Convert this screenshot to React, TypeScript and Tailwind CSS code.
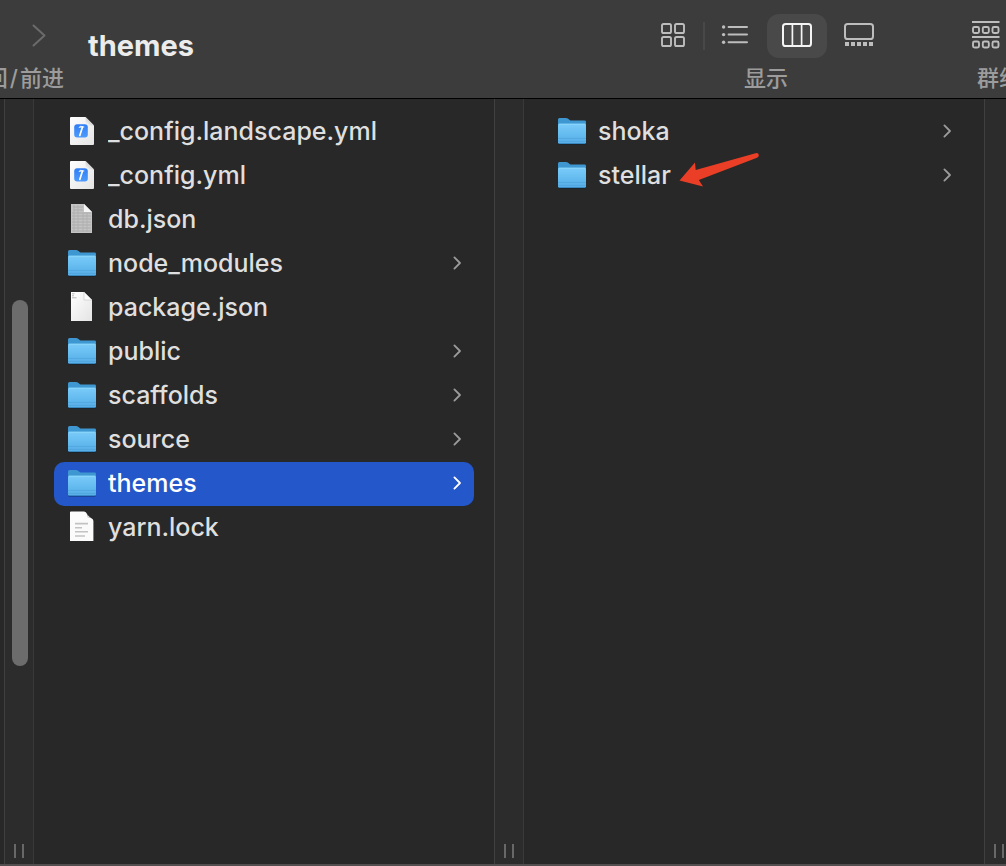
import { useState, type ReactNode } from 'react';

type Kind = 'folder' | 'yaml' | 'data' | 'json' | 'text';

interface Entry {
  name: string;
  kind: Kind;
}

const projectEntries: Entry[] = [
  { name: '_config.landscape.yml', kind: 'yaml' },
  { name: '_config.yml', kind: 'yaml' },
  { name: 'db.json', kind: 'data' },
  { name: 'node_modules', kind: 'folder' },
  { name: 'package.json', kind: 'json' },
  { name: 'public', kind: 'folder' },
  { name: 'scaffolds', kind: 'folder' },
  { name: 'source', kind: 'folder' },
  { name: 'themes', kind: 'folder' },
  { name: 'yarn.lock', kind: 'text' },
];

const themeEntries: Entry[] = [
  { name: 'shoka', kind: 'folder' },
  { name: 'stellar', kind: 'folder' },
];

function IconDefs() {
  return (
    <svg width="0" height="0" className="absolute" aria-hidden="true">
      <defs>
        <linearGradient id="folderFront" x1="0" y1="0" x2="0" y2="1">
          <stop offset="0" stopColor="#7acbfa" />
          <stop offset="0.6" stopColor="#62b9ee" />
          <stop offset="1" stopColor="#58aee6" />
        </linearGradient>
        <linearGradient id="paper" x1="0" y1="0" x2="1" y2="1">
          <stop offset="0" stopColor="#ffffff" />
          <stop offset="1" stopColor="#e4e4e4" />
        </linearGradient>
        <linearGradient id="fold" x1="0" y1="1" x2="1" y2="0">
          <stop offset="0" stopColor="#ffffff" />
          <stop offset="0.5" stopColor="#d2d2d2" />
        </linearGradient>
        <linearGradient id="badge" x1="0" y1="0" x2="0" y2="1">
          <stop offset="0" stopColor="#2f7ef6" />
          <stop offset="1" stopColor="#4e9bfb" />
        </linearGradient>
      </defs>
    </svg>
  );
}

function FileIcon({ kind }: { kind: Kind }) {
  return (
    <svg viewBox="0 0 32 32" className="size-8 shrink-0" aria-hidden="true">
      {kind === 'folder' && (
        <>
          <path d="M2 4.5Q2 3 3.5 3H10Q11 3 11.8 3.6L14 5.2Q14.6 5.6 15.5 5.6H28.5Q30 5.6 30 7V27.6Q30 29 28.5 29H3.5Q2 29 2 27.6Z" fill="#000" opacity="0.35" transform="translate(0 0.7)" />
          <path d="M2 4.5Q2 3 3.5 3H10Q11 3 11.8 3.6L14 5.2Q14.6 5.6 15.5 5.6H28.5Q30 5.6 30 7V20H2Z" fill="#3f97d2" />
          <path d="M2 10.2Q2 8.8 3.5 8.8H28.5Q30 8.8 30 10.2V27.4Q30 28.8 28.5 28.8H3.5Q2 28.8 2 27.4Z" fill="url(#folderFront)" />
          <path d="M3 9.2H29" stroke="#94dbfd" strokeWidth="0.8" />
          <path d="M2 23.4H30M2 26.4H30" stroke="#4a9fd6" strokeWidth="0.6" />
          <path d="M2.8 28.6H29.2" stroke="#3285c2" strokeWidth="0.8" />
        </>
      )}
      {kind === 'yaml' && (
        <>
          <path d="M4 3Q4 2 5 2H19.5L28 10.5V29Q28 30 27 30H5Q4 30 4 29Z" fill="url(#paper)" />
          <path d="M19.5 2L28 10.5H20.5Q19.5 10.5 19.5 9.5Z" fill="url(#fold)" />
          <rect x="8.2" y="9.2" width="13.6" height="13.4" rx="3" fill="url(#badge)" />
          <path d="M16.4 12.2L13.8 20.4" stroke="#fff" strokeWidth="1.7" strokeLinecap="round" />
          <path d="M12.6 12.2L14.6 10.8L18.4 11.4L18.2 12.6L15.4 12.4L13.2 13Z" fill="#fff" opacity="0.85" />
        </>
      )}
      {kind === 'data' && (
        <>
          <path d="M5 1H18.2L26 9V30H5Z" fill="#c4c4c4" />
          <path d="M7 4H17M7 7H17M6 10H25M6 13H25M6 16H25M6 19H25M6 22H25M6 25H25M6 28H25" stroke="#a0a0a0" strokeWidth="0.6" />
          <path d="M8 2V29M12 2V29M17 10V29M21 10V29" stroke="#adadad" strokeWidth="0.7" />
          <path d="M18 1L26 9H18Z" fill="#f6f6f6" />
        </>
      )}
      {kind === 'json' && (
        <>
          <path d="M5 1H18L26 9V30H5Z" fill="url(#paper)" />
          <path d="M6 2.8H8.5M6 4.8H8M6 6.8H10.5" stroke="#b5b5b5" strokeWidth="1" />
          <path d="M18 1L26 9H18Z" fill="#fcfcfc" stroke="#c4c4c4" strokeWidth="0.6" />
        </>
      )}
      {kind === 'text' && (
        <>
          <path d="M4 1Q4 0.4 5 0.4H18Q20.2 0.4 21 3Q21.4 6.4 25 7Q27.4 8 27.4 10V30H4Z" fill="#fbfbfb" />
          <path d="M18 0.4L27.4 9.5Q26 6.7 21.5 6.6Q21.4 2 18 0.4Z" fill="#d6d6d6" />
          <path d="M9 12.6H22M9 16.7H16M9 20.8H22M9 25H19" stroke="#c3c3c3" strokeWidth="1.6" />
        </>
      )}
    </svg>
  );
}

function Column({
  entries,
  label,
  initial,
  marked,
}: {
  entries: Entry[];
  label: string;
  initial?: string;
  marked?: string;
}) {
  const [selected, setSelected] = useState(initial);
  return (
    <ul aria-label={label} className="min-w-0 flex-1 px-5 pt-[11px]">
      {entries.map(({ name, kind }) => {
        const active = name === selected;
        return (
          <li key={name} className="relative">
            <button
              type="button"
              onClick={() => setSelected(name)}
              className={`flex h-11 w-full items-center gap-2.5 rounded-[10px] px-3 pb-0.5 text-left text-[25px] leading-8 font-medium ${
                active ? 'bg-[#2457c9] text-white' : 'text-[#dfdfdf]'
              }`}
            >
              <FileIcon kind={kind} />
              <span className="flex-1 truncate">{name}</span>
              {kind === 'folder' && (
                <svg
                  viewBox="0 0 10 14"
                  className={`h-3.5 w-2.5 shrink-0 ${active ? 'text-white' : 'text-[#9b9b9b]'}`}
                  fill="none"
                  stroke="currentColor"
                  strokeWidth="1.8"
                  strokeLinecap="round"
                  strokeLinejoin="round"
                  aria-hidden="true"
                >
                  <path d="M2.4 1.4L8 7L2.4 12.6" />
                </svg>
              )}
            </button>
            {name === marked && (
              <svg viewBox="0 0 82 40" className="pointer-events-none absolute -top-1 left-[134px] h-10 w-[82px]" aria-hidden="true">
                <path d="M1.5 30.5L17 12.5L17.7 20L77.5 3.2Q80.2 2.6 80.8 4.8Q81.2 6.6 79 7.8L20.8 30L25 36.5Z" fill="#ea3f26" />
              </svg>
            )}
          </li>
        );
      })}
    </ul>
  );
}

function Gutter({ clipped = false, children }: { clipped?: boolean; children?: ReactNode }) {
  return (
    <div
      className={`relative flex shrink-0 flex-col justify-end overflow-hidden border-l border-[#404040] bg-[#2c2c2c] pb-1.5 pl-[9px] ${
        clipped ? 'w-[22px]' : 'w-[30px] border-r border-r-[#393939]'
      }`}
    >
      {children}
      <div className="flex gap-1.5">
        <span className="h-3.5 w-0.5 shrink-0 bg-[#686868]" />
        <span className="h-3.5 w-0.5 shrink-0 bg-[#686868]" />
      </div>
    </div>
  );
}

const views: { id: string; label: string; icon: ReactNode }[] = [
  {
    id: 'icons',
    label: '图标',
    icon: (
      <g strokeWidth="1.9">
        <rect x="4" y="3" width="9" height="9" rx="1.6" />
        <rect x="17" y="3" width="9" height="9" rx="1.6" />
        <rect x="4" y="16" width="9" height="9" rx="1.6" />
        <rect x="17" y="16" width="9" height="9" rx="1.6" />
      </g>
    ),
  },
  {
    id: 'list',
    label: '列表',
    icon: (
      <>
        <path d="M8.6 6H27M8.6 13.6H27M8.6 21.3H27" strokeWidth="2" strokeLinecap="round" />
        <g fill="currentColor" stroke="none">
          <circle cx="3.6" cy="6" r="1.7" />
          <circle cx="3.6" cy="13.6" r="1.7" />
          <circle cx="3.6" cy="21.3" r="1.7" />
        </g>
      </>
    ),
  },
  {
    id: 'columns',
    label: '分栏',
    icon: (
      <>
        <rect x="1" y="3" width="28" height="22" rx="2.6" strokeWidth="2" />
        <path d="M10.4 3V25M19.6 3V25" strokeWidth="1.7" />
      </>
    ),
  },
  {
    id: 'gallery',
    label: '画廊',
    icon: (
      <>
        <rect x="1" y="3" width="28" height="15" rx="2.6" strokeWidth="2" />
        <path d="M1 23H5M7 23H11M13 23H17M19 23H23M25 23H29" strokeWidth="4" />
      </>
    ),
  },
];

function Toolbar() {
  const [view, setView] = useState('columns');
  return (
    <header className="flex h-[99px] shrink-0 overflow-hidden border-b border-black bg-[#3c3c3c]">
      <div className="flex w-16 shrink-0 flex-col items-end overflow-hidden pt-3.5">
        <button type="button" aria-label="前进" className="flex h-11 w-[50px] items-center justify-center text-[#6b6b6b]">
          <svg viewBox="0 0 16 24" className="h-6 w-4" fill="none" stroke="currentColor" strokeWidth="2" strokeLinecap="round" strokeLinejoin="round" aria-hidden="true">
            <path d="M2.5 1.5L13.5 11.5L2.5 21.5" />
          </svg>
        </button>
        <span className="mt-1 text-[22px] leading-8 font-medium whitespace-nowrap text-[#9c9c9c]">
          返回<span className="px-0.5">/</span>前进
        </span>
      </div>
      <h1 className="min-w-0 flex-1 truncate pt-7 pl-6 text-[29px] leading-9 font-bold text-[#ececec]">themes</h1>
      <div className="flex shrink-0 flex-col items-center pt-3.5">
        <div className="flex items-center gap-0.5" role="group" aria-label="显示">
          {views.map(({ id, label, icon }, i) => (
            <button
              key={id}
              type="button"
              aria-label={label}
              aria-pressed={id === view}
              onClick={() => setView(id)}
              className={`relative flex h-11 w-[60px] items-center justify-center rounded-xl ${
                id === view ? 'bg-[#494949] text-[#f4f4f4]' : 'text-[#bdbdbd]'
              }`}
            >
              <svg viewBox="0 0 30 30" className="size-[30px]" fill="none" stroke="currentColor" aria-hidden="true">
                {icon}
              </svg>
              {i === 0 && <span className="absolute top-2 -right-0.5 h-7 w-0.5 bg-[#484848]" />}
            </button>
          ))}
        </div>
        <span className="mt-1 text-[22px] leading-8 font-medium text-[#9c9c9c]">显示</span>
      </div>
      <div className="ml-[82px] w-[35px] shrink-0 overflow-hidden pt-3.5">
        <button type="button" aria-label="群组" className="flex h-11 items-center text-[#bdbdbd]">
          <svg viewBox="0 0 30 30" className="size-[30px]" fill="none" stroke="currentColor" strokeWidth="1.9" aria-hidden="true">
            <path d="M1 1H28.5M1 16H28.5" strokeWidth="2" />
            <rect x="2" y="6" width="6" height="6" rx="1.5" />
            <rect x="11.8" y="6" width="6" height="6" rx="1.5" />
            <rect x="21.5" y="6" width="6" height="6" rx="1.5" />
            <rect x="2" y="20.5" width="6" height="6" rx="1.5" />
            <rect x="11.8" y="20.5" width="6" height="6" rx="1.5" />
            <rect x="21.5" y="20.5" width="6" height="6" rx="1.5" />
          </svg>
        </button>
        <span className="mt-1 block pl-1.5 text-[22px] leading-8 font-medium whitespace-nowrap text-[#9c9c9c]">群组</span>
      </div>
    </header>
  );
}

export default function App() {
  return (
    <div className="flex min-h-screen flex-col overflow-hidden border-b-2 border-[#524e50] bg-[#282828] font-['Inter','Noto_Sans_CJK_SC',sans-serif]">
      <IconDefs />
      <Toolbar />
      <main className="flex flex-1">
        <div className="w-1 shrink-0" />
        <Gutter>
          <span className="absolute top-[201px] left-[7px] h-[366px] w-4 rounded-full bg-[#6c6c6c]" />
        </Gutter>
        <Column entries={projectEntries} label="blog" initial="themes" />
        <Gutter />
        <Column entries={themeEntries} label="themes" marked="stellar" />
        <Gutter clipped />
      </main>
    </div>
  );
}
